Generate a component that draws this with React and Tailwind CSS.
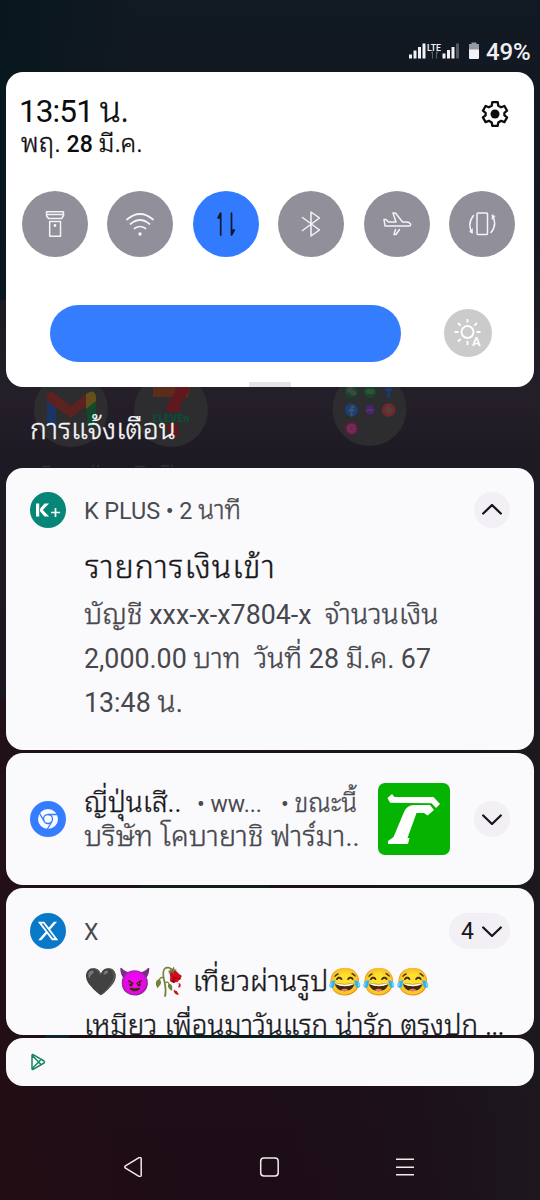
import React from 'react';

const X_PATH =
  'M18.244 2.25h3.308l-7.227 8.26 8.502 11.24H16.17l-5.214-6.817L4.99 21.75H1.68l7.73-8.835L1.254 2.25H8.08l4.713 6.231zm-1.161 17.52h1.833L7.084 4.126H5.117z';

function Th({ className = 'text-[1.11em]', children }) {
  return (
    <span className={"font-['Noto_Sans_Thai_Looped',Roboto,sans-serif] font-light [line-height:0] [-webkit-text-stroke:0.350px_currentColor] " + className}>
      {children}
    </span>
  );
}

function Wallpaper() {
  return (
    <div className="absolute inset-0 -z-10 bg-[linear-gradient(180deg,#111922_0%,#151821_20%,#241f28_33%,#1e1a23_38%,#1c1520_65%,#1e0f18_88%,#1e0c15_100%)]">
      <svg className="absolute inset-0" width="540" height="1200" viewBox="0 0 540 1200">
        <defs>
          <linearGradient id="side" x1="0" x2="1" y1="0" y2="0">
            <stop offset="0" stopColor="#04161c" stopOpacity="0.7" />
            <stop offset="0.25" stopColor="#04161c" stopOpacity="0" />
          </linearGradient>
          <linearGradient id="low" x1="0" x2="1" y1="0" y2="0">
            <stop offset="0" stopColor="#260d14" stopOpacity="0.6" />
            <stop offset="0.5" stopColor="#1a0d18" stopOpacity="0.3" />
            <stop offset="1" stopColor="#1d191e" stopOpacity="0.9" />
          </linearGradient>
        </defs>
        <rect width="540" height="300" fill="url(#side)" />
        <rect y="700" width="540" height="500" fill="url(#low)" />
        <g fill="#2d2c2f">
          <circle cx="71" cy="410" r="37" />
          <circle cx="171" cy="410" r="37" />
          <circle cx="369.5" cy="409" r="37" />
        </g>
        <path d="M47 395l9 7v24h-6q-3 0-3-3z" fill="#1b3466" />
        <path d="M96 395l-9 7v24h6q3 0 3-3z" fill="#12482c" />
        <path d="M47 397q0-6 6-5l18 14 15-12v12l-15 12-24-17z" fill="#5c221f" />
        <path d="M86 394q8-6 10 2v5l-10 8z" fill="#65501c" />
        <path d="M153 387h37v3l-2 7h-35z" fill="#5c2c1a" />
        <path d="M189 387v5q-8 8-10 20h-13q2-12 9-19v-6z" fill="#5f191e" />
        <path d="M166 424h12v13h-8z" fill="#5f191e" />
        <rect x="152" y="413" width="38" height="10" fill="#2d2c2f" />
        <text x="152.500" y="422" textLength="37" fontSize="11" fontWeight="900" fill="#0f4a37" fontFamily="Roboto, sans-serif">ELEVEn</text>
        <path d="M42 466.500h8M92 466h2M97 466h2M135 466.500h10M161 466h8M171 466h2" stroke="#322f37" strokeWidth="1.500" />
        <g>
          <circle cx="351.500" cy="391.500" r="6.500" fill="#144728" />
          <circle cx="370" cy="391.500" r="6.500" fill="#144728" />
          <ellipse cx="350" cy="390" rx="3.500" ry="3" fill="#414641" />
          <ellipse cx="353.500" cy="393" rx="3" ry="2.500" fill="#414641" />
          <rect x="365.500" y="389" width="9" height="5" rx="2.500" fill="#374f3b" />
          <path d="M387.500 398v-7h-2.500v-2.500h2.500q0-5 4.500-4v2.500q-2 0-2 1.500h2v2.500h-2v7z" fill="#173c75" />
          <circle cx="351.500" cy="410" r="6.500" fill="#163f7c" />
          <path d="M350.500 416.500v-5.500h-2v-2h2q0-4 4-3.500v2q-2 0-2 1.500h2l-.5 2h-1.500v5.500z" fill="#48505a" />
          <circle cx="370" cy="410" r="4.700" fill="#46246f" />
          <path d="M367 411.500l2-2 2 1.500 2-2" stroke="#5b4a5f" fill="none" />
          <circle cx="388.700" cy="410" r="6.800" fill="#72282b" />
          <path d="M385.500 408q3-1 3-2 4 2 3.500 5-1 3-4 2.500t-2.500-5.500z" fill="#4f4140" />
          <circle cx="351.500" cy="428.500" r="6.500" fill="#6a1747" />
          <path d="M346 432q5 4 10 0-4 4-10 0z" fill="#86501d" />
          <rect x="348" y="425" width="7" height="7" rx="2" fill="none" stroke="#744a63" />
          <circle cx="351.500" cy="428.500" r="1.700" fill="none" stroke="#744a63" />
        </g>
        <g fill="#121f17">
          <rect x="140" y="885" width="130" height="4" />
          <rect x="400" y="885" width="110" height="4" />
        </g>
        <rect x="45" y="1034" width="24" height="5" fill="#0c2733" />
        <rect x="160" y="1034" width="190" height="5" fill="#082020" />
      </svg>
    </div>
  );
}

function StatusBar() {
  return (
    <div className="flex h-[72px] items-start pl-[409px] pt-[38px] text-[#f0f0f5]">
      <svg width="70" height="26" viewBox="0 0 70 26" className="shrink-0">
        <g fill="#f0f0f5">
          <path d="M0 16.500h3v4H0zM4.500 12.500h3v8h-3zM9 9h3v11.500H9zM13.500 5.500h3v15h-3z" />
          <path d="M33.500 15.500h3v5h-3zM38 12h3v8.500h-3zM42.500 9h3v11.500h-3z" />
          <path d="M47 5.500h3v15h-3z" opacity=".3" />
          <path d="M62.500 4.500h5V6H70v6H60V6h2.500z" opacity=".6" />
          <path d="M60 11.500h10V20q0 1-1 1h-8q-1 0-1-1z" />
        </g>
        <text x="18" y="12.500" textLength="14" lengthAdjust="spacingAndGlyphs" fontSize="9" fontWeight="600" fill="#f0f0f5" fontFamily="Roboto, sans-serif">LTE</text>
        <path d="M23.500 13.500v7M22 15.500l1.500-2M27.500 13.500v7M29 13.500l-1.500 3" stroke="#5b606b" fill="none" />
      </svg>
      <span className="ml-[7px] mt-[1px] text-[24px] leading-[26px] font-medium tracking-[-0.200px]">49%</span>
    </div>
  );
}

function Toggle({ active, children }) {
  return (
    <div className={'flex size-[66px] items-center justify-center rounded-full ' + (active ? 'bg-[#327bff]' : 'bg-[#908f9a]')}>
      <svg width="30" height="30" viewBox="0 0 30 30" fill="none" stroke={active ? '#10192c' : '#f4f4f8'} strokeWidth="1.5" strokeLinejoin="round" strokeLinecap="round">
        {children}
      </svg>
    </div>
  );
}

function QuickSettings() {
  return (
    <section className="mx-[6px] flex h-[315px] flex-col rounded-[17px] bg-white text-[#0c0c0e]">
      <div className="flex h-[118.500px] justify-between">
        <div className="pl-[13px] pt-[21px]">
          <div className="h-[38px] whitespace-nowrap text-[31.500px] leading-[38px] tracking-[-0.900px]">13:51 <Th>น.</Th></div>
          <div className="h-[28px] whitespace-nowrap pl-[2px] text-[23px] leading-[28px]"><Th className="text-[1.13em] tracking-[0.200px]">พฤ.</Th> <b className="font-medium">28</b> <Th className="text-[1.11em]">มี.ค.</Th></div>
        </div>
        <svg width="28" height="28" viewBox="0 0 28 28" className="mr-[25px] mt-[28px]">
          <path d="M11.300 2.200h5.400l.6 3.500 2.800 1.600 3.300-1.300 2.700 4.700-2.700 2.100v2.500l2.700 2.100-2.700 4.700-3.300-1.300-2.800 1.600-.6 3.400h-5.400l-.6-3.400-2.800-1.600L4.600 22.100l-2.700-4.700 2.700-2.100v-2.500L1.900 10.700 4.600 6l3.300 1.300 2.800-1.600z" fill="none" stroke="#0c0c0e" strokeWidth="2.300" strokeLinejoin="round" />
          <circle cx="14" cy="14" r="4.500" fill="#0c0c0e" />
        </svg>
      </div>
      <div className="flex justify-between pl-[15.500px] pr-[18.500px]">
        <Toggle>
          <path d="M6.500 2.700h17v4l-2 2.800h-13l-2-2.800zM7 5.500h16M9.700 12.500h10.800v14.700H9.700z" />
          <circle cx="15" cy="16.500" r="1.400" fill="#f4f4f8" stroke="none" />
        </Toggle>
        <Toggle>
          <path d="M2 10.500q13-11 26 0M5.500 15q9.500-8 19 0M9.500 19.500q5.500-4 11 0" strokeWidth="1.700" />
          <circle cx="15" cy="25" r="1.700" fill="#f4f4f8" stroke="none" />
        </Toggle>
        <Toggle active>
          <path d="M9.700 26V4l-2.700 5h2.700M20.500 4v22l2.700-5h-2.700" strokeWidth="1.700" />
        </Toggle>
        <Toggle>
          <path d="M6.500 8.500l17 12.500-8.500 6V3l8.500 6L6.500 21.500" />
        </Toggle>
        <Toggle>
          <path d="M2 10.500h2l2.500 2.500h7.500L11 4h2.500l7 9h4q3 0 4 2 .5 2-1.500 2H3zM17.500 20.500L14 25.500h-2l1.500-5" />
        </Toggle>
        <Toggle>
          <rect x="10" y="4" width="10.500" height="21.500" rx="1" />
          <path d="M6.500 6.500q-6.500 8-1.500 17M24 23.500q6.500-8 1.500-17" />
          <path d="M5.500 24v-4.500L2.500 22.500zM25 6v4.500l3-3z" fill="#f4f4f8" strokeWidth=".5" />
        </Toggle>
      </div>
      <div className="flex items-center pl-[43.500px] pt-[48px]">
        <div className="h-[57px] w-[351px] rounded-full bg-[#347dff]" />
        <div className="ml-[43.500px] flex size-[48px] items-center justify-center rounded-full bg-[#cbcbcb]">
          <svg width="30" height="30" viewBox="0 0 30 30" fill="none" stroke="#fff" strokeWidth="1.900">
            <circle cx="14.500" cy="14" r="6" />
            <path d="M14.500 1v3.500M14.500 23v4M1.500 14h4M23.500 14h4M5 5l2.700 2.700M24 5l-2.700 2.700M5 23.500l2.700-2.700" />
            <text x="19" y="27.500" fontSize="13" fontWeight="600" fill="#fff" stroke="none" fontFamily="Roboto, sans-serif">A</text>
          </svg>
        </div>
      </div>
      <div className="ml-[243px] mt-auto h-[5px] w-[42px] rounded-t-[1px] bg-[#e4e4e6]" />
    </section>
  );
}

function Chevron({ up }) {
  return (
    <svg width="20" height="12" viewBox="0 0 20 12" fill="none" stroke="#17171b" strokeWidth="2.300" strokeLinecap="round" strokeLinejoin="round">
      <path d={up ? 'M1.200 9.500L10 1l8.800 8.500' : 'M1.200 2.500L10 11l8.800-8.500'} />
    </svg>
  );
}

function KPlusCard() {
  return (
    <article className="mb-[3px] flex h-[282px] rounded-[17px] bg-[#fafafc] pl-[24px] pr-[24px] pt-[24px]">
      <svg width="36" height="36" viewBox="0 0 36 36" className="shrink-0">
        <circle cx="18" cy="18" r="18" fill="#068676" />
        <path d="M6 11.500h3.200v13H6zM14.500 11.500h4.600l-6.300 6.500 6.300 6.500h-4.600L10 19.200v-2.400z" fill="#fff" />
        <path d="M21 20.500h9M25.500 16v9" stroke="#fff" strokeWidth="1.700" />
      </svg>
      <div className="ml-[18px] w-[372px] shrink-0 whitespace-nowrap">
        <div className="h-[36px] text-[23.500px] leading-[39px] tracking-[-0.100px] text-[#4a4a51]">K PLUS • 2 <Th>นาที</Th></div>
        <div className="mt-[18px] h-[40px] pl-[1px] text-[32px] leading-[42px] tracking-[1px] text-[#17171b]"><Th className="text-[32px]">รายการเงินเข้า</Th></div>
        <div className="mt-[7px] text-[26.800px] leading-[44px] text-[#47474e]">
          <div className="whitespace-pre"><Th className="text-[1.08em]">บัญชี</Th> xxx-x-x7804-x  <Th className="text-[1.06em]">จำนวนเงิน</Th></div>
          <div className="whitespace-pre">2,000.00 <Th className="text-[1.05em]">บาท</Th>  <Th className="text-[1.05em]">วันที่</Th> 28 <Th className="text-[1.05em]">มี.ค.</Th> 67</div>
          <div>13:48 <Th>น.</Th></div>
        </div>
      </div>
      <div className="ml-[18px] flex size-[36px] shrink-0 items-center justify-center rounded-full bg-[#f2f0f5]"><Chevron up /></div>
    </article>
  );
}

function ChromeCard() {
  return (
    <article className="mb-[3px] flex h-[132px] items-center rounded-[17px] bg-[#fafafc] px-[24px]">
      <svg width="36" height="36" viewBox="0 0 36 36" className="shrink-0">
        <circle cx="18" cy="18" r="18" fill="#347dff" />
        <circle cx="18" cy="18" r="10" fill="#fafafc" />
        <g fill="none" stroke="#347dff" strokeWidth="1.300">
          <circle cx="18" cy="18" r="4.500" />
          <path d="M18 13.500h9.500M14.100 20.200L9.300 12M21.900 20.200l-4.700 8.300" />
        </g>
      </svg>
      <div className="ml-[18px] w-[276px] shrink-0 whitespace-nowrap">
        <div className="flex h-[35px] items-baseline leading-[35px]">
          <span className="w-[113px] text-[26.500px] text-[#17171b]"><Th className="text-[1.060em]">ญี่ปุ่นเสี</Th>..</span>
          <span className="w-[84px] text-[23px] text-[#4a4a51]">• ww...</span>
          <span className="text-[23px] text-[#4a4a51]">• <Th className="text-[1.13em]">ขณะนี้</Th></span>
        </div>
        <div className="h-[34px] text-[26.500px] leading-[34px] text-[#47474e]"><Th className="text-[1.09em]">บริษัท โคบายาชิ ฟาร์มา</Th>..</div>
      </div>
      <svg width="72" height="72" viewBox="0 0 72 72" className="ml-[18px] shrink-0">
        <rect width="72" height="72" rx="7" fill="#04b400" />
        <path d="M9.500 15l4.500-4 2.500 3h39l6.500 7-4 4-4.500-4.800L12 19.800z" fill="#fff" />
        <path d="M36 22h16l4 5-6.500 5.500-3.500-2.500h-7.500L29.500 55h2l-1.500 6H10v-3l5.500-4L26 29q3-7 10-7z" fill="#fff" />
      </svg>
      <div className="ml-[24px] flex size-[36px] shrink-0 items-center justify-center rounded-full bg-[#f2f0f5]"><Chevron /></div>
    </article>
  );
}

function XCard() {
  return (
    <article className="mb-[3px] flex h-[147px] overflow-hidden rounded-[17px] bg-[#fafafc] px-[24px] pt-[25px]">
      <svg width="36" height="36" viewBox="0 0 36 36" className="shrink-0">
        <circle cx="18" cy="18" r="18" fill="#0878c9" />
        <path d={X_PATH} fill="#fff" transform="translate(6.600 6.500) scale(.95)" />
      </svg>
      <div className="ml-[18px] w-0 flex-1 whitespace-nowrap">
        <div className="flex h-[36px] justify-between">
          <span className="text-[23px] leading-[40px] text-[#4a4a51]">X</span>
          <span className="flex h-[36px] w-[61px] items-center rounded-full bg-[#f2f0f5] pl-[12px] text-[#17171b]">
            <span className="mr-[8px] pt-[2px] text-[23px] leading-[38px]">4</span>
            <Chevron />
          </span>
        </div>
        <div className="mt-[11px] text-[27px] leading-[44px] text-[#17171b]">
          <div>🖤😈🥀 <Th className="text-[1.06em]">เที่ยวผ่านรูป</Th>😂😂😂</div>
          <div><Th className="text-[1.03em]">เหมียว เพื่อนมาวันแรก น่ารัก ตรงปก</Th> <span className="tracking-[-0.800px]">...</span></div>
        </div>
      </div>
    </article>
  );
}

function PlayCard() {
  return (
    <article className="flex h-[48px] items-center rounded-[17px] bg-[#fafafc] pl-[24px]">
      <svg width="18" height="18" viewBox="0 0 18 18" fill="none" stroke="#178464" strokeWidth="1.500" strokeLinejoin="round">
        <path d="M2 2.500q0-1.300 1.200-.8l10.800 6.300q1 1 0 2L3.200 16.300Q2 16.800 2 15.500zM2.300 2.500L11.500 12M2.300 15.500L11.500 6" />
      </svg>
    </article>
  );
}

function NavBar() {
  return (
    <nav className="flex h-[114px] items-start pl-[119px] pt-[71px]">
      <svg width="300" height="20" viewBox="0 0 300 20" fill="none" stroke="#f3e9ee" strokeWidth="1.500" strokeLinejoin="round">
        <path d="M6.500 8.800L19.600.8q2.400-1 2.600 1v16.400q-.2 2-2.600 1L6.500 11.200q-1.400-1.200 0-2.400z" />
        <rect x="141.700" y="1" width="17.500" height="18" rx="3.200" />
        <path d="M277 2.200h18M277 10.200h18M277 17.700h18" />
      </svg>
    </nav>
  );
}

export default function App() {
  return (
    <div className="relative isolate h-[1200px] w-[540px] overflow-hidden font-[Roboto,sans-serif]">
      <Wallpaper />
      <StatusBar />
      <QuickSettings />
      <h2 className="h-[81px] whitespace-nowrap pl-[30px] pt-[25px] text-[25px] leading-[38px] text-[#f5f5f7]"><Th className="text-[1.13em]">การแจ้งเตือน</Th></h2>
      <main className="mx-[6px] flex flex-col">
        <KPlusCard />
        <ChromeCard />
        <XCard />
        <PlayCard />
      </main>
      <NavBar />
    </div>
  );
}
